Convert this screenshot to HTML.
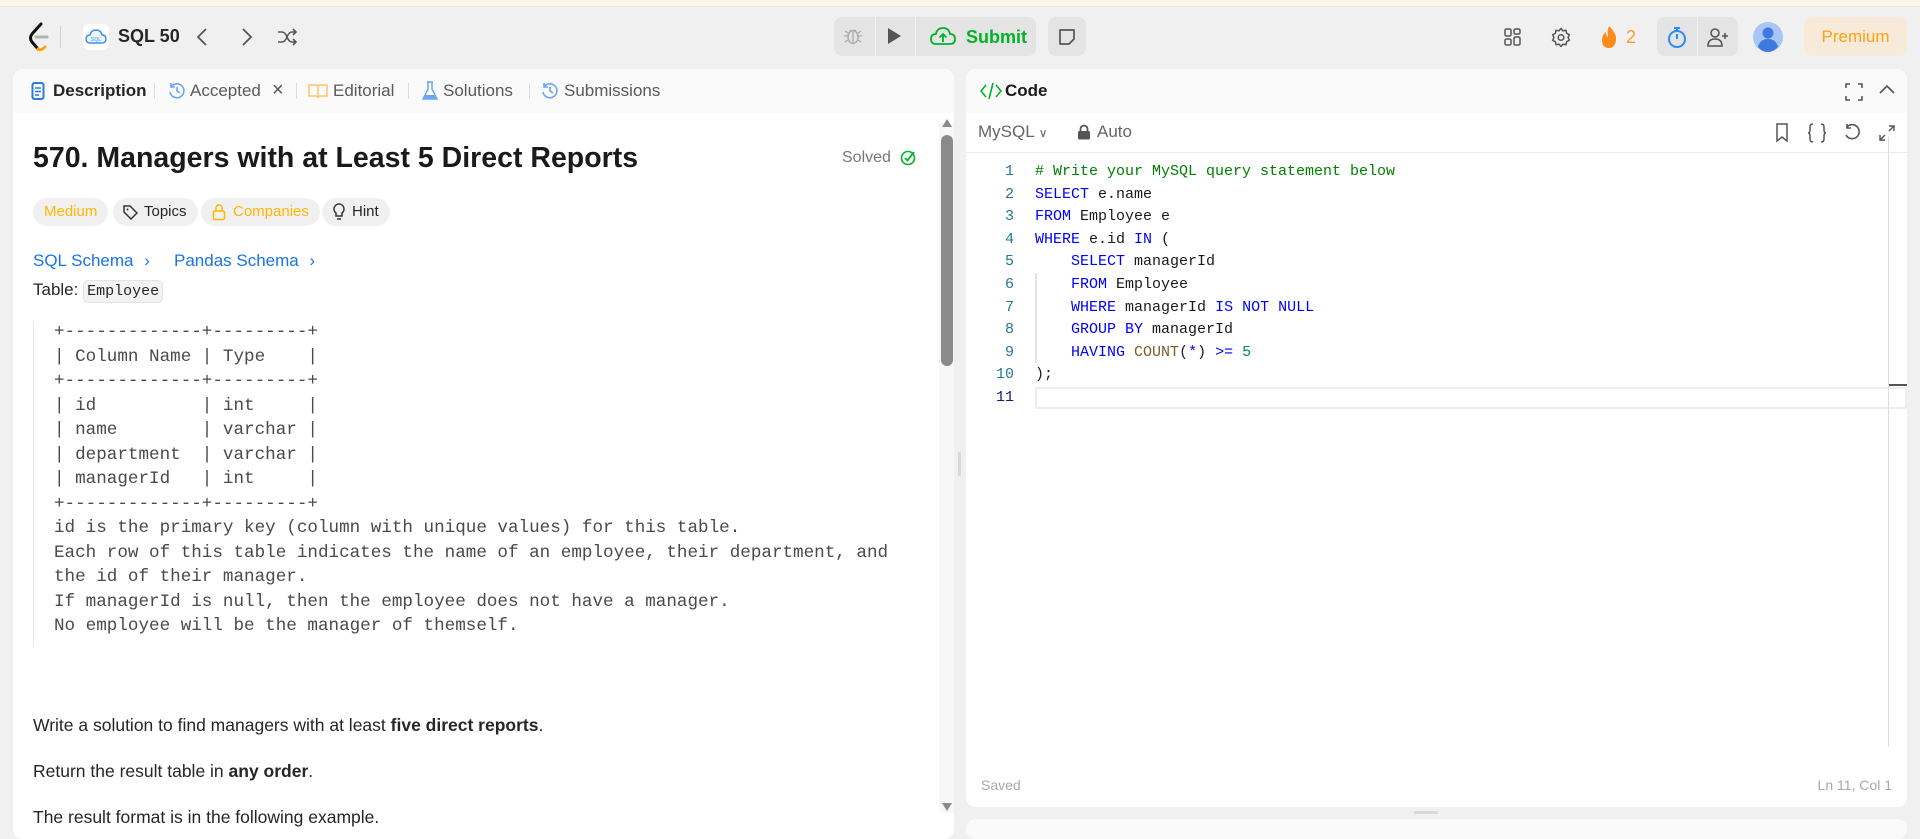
<!DOCTYPE html>
<html><head><meta charset="utf-8"><style>
*{box-sizing:border-box;margin:0;padding:0}
body{width:1920px;height:826px;overflow:hidden;background:#f0f0f0;font-family:"Liberation Sans",sans-serif;color:#262626;position:relative}
.abs{position:absolute}
.cream{left:0;top:0;width:1920px;height:7px;background:#fdf6e8;border-bottom:1px solid #eee6d6}
.btn{background:#e4e4e4;border-radius:8px}
.panel{background:#fff;border-radius:10px;overflow:hidden}
.tabbar{background:#fafafa;height:44px;position:absolute;left:0;top:0;right:0;display:flex;align-items:center;font-size:17px;color:#5a5a5a}
.mono{font-family:"Liberation Mono",monospace}
.tag{position:absolute;top:129px;height:28px;border-radius:14px;background:#f0f0f0;font-size:15px;line-height:28px;padding:0 11px}
pre{font-family:"Liberation Mono",monospace;font-size:17.6px;line-height:24.5px;color:#4a4a4a}
.code div{height:22.6px;line-height:22.6px;white-space:pre;position:relative}
.k{color:#0000ff}.c{color:#008000}.n{color:#098658}.f{color:#795e26}
.ln{position:absolute;left:8px;width:40px;text-align:right;color:#237893}
.tx{position:absolute;left:69px}
</style></head><body>
<div class="abs cream"></div>

<svg class="abs" style="left:28px;top:22px" width="22" height="30" viewBox="0 0 22 30"><path d="M13 2 L4 12 Q1 16 4 20 L10 27" stroke="#111" stroke-width="3" fill="none" stroke-linecap="round"/><path d="M8 15 H19" stroke="#b3b3b3" stroke-width="3" stroke-linecap="round"/><path d="M10 27 Q13 29 17 25" stroke="#ffa116" stroke-width="3" fill="none" stroke-linecap="round"/></svg>
<div class="abs" style="left:60px;top:26px;width:1px;height:22px;background:#d0d0d0"></div>
<div class="abs" style="left:83px;top:24px;width:26px;height:26px;background:#fff;border-radius:6px"></div>
<svg class="abs" style="left:85px;top:28px" width="22" height="18" viewBox="0 0 22 18"><path d="M5 15 Q1 15 1 11 Q1 7 5 7 Q6 2 11 2 Q16 2 17 7 Q21 7 21 11 Q21 15 17 15Z" fill="#eaf4ff" stroke="#3d8fe8" stroke-width="1.4"/><text x="11" y="13" font-size="5" fill="#3d8fe8" text-anchor="middle" font-family="Liberation Sans">SQL</text></svg>
<div class="abs" style="left:118px;top:26px;font-size:18px;font-weight:bold;color:#262626">SQL 50</div>
<svg class="abs" style="left:195px;top:27px" width="14" height="20"><path d="M11 2 L3 10 L11 18" stroke="#555" stroke-width="1.8" fill="none"/></svg>
<svg class="abs" style="left:240px;top:27px" width="14" height="20"><path d="M3 2 L11 10 L3 18" stroke="#555" stroke-width="1.8" fill="none"/></svg>
<svg class="abs" style="left:276px;top:27px" width="22" height="20" viewBox="0 0 22 20"><path d="M2 5 H6 Q9 5 11 10 Q13 15 16 15 H20 M2 15 H6 Q9 15 11 10 Q13 5 16 5 H20 M17 2 L20 5 L17 8 M17 12 L20 15 L17 18" stroke="#555" stroke-width="1.6" fill="none"/></svg>

<div class="abs btn" style="left:834px;top:17px;width:202px;height:39px"></div>
<div class="abs" style="left:875px;top:17px;width:1px;height:39px;background:#f0f0f0"></div>
<div class="abs" style="left:915px;top:17px;width:1px;height:39px;background:#f0f0f0"></div>
<svg class="abs" style="left:843px;top:26px" width="20" height="20" viewBox="0 0 20 20"><ellipse cx="10" cy="11" rx="5" ry="6.5" stroke="#aaa" stroke-width="1.4" fill="none"/><path d="M10 5v13M5 10H1M19 10h-4M5 14l-3 2M15 14l3 2M5 7L2 5M15 7l3-2M7 4l1 1M13 4l-1 1" stroke="#aaa" stroke-width="1.3"/></svg>
<svg class="abs" style="left:886px;top:27px" width="16" height="18"><path d="M2 1 L15 9 L2 17Z" fill="#555"/></svg>
<svg class="abs" style="left:930px;top:25px" width="26" height="22" viewBox="0 0 26 22"><path d="M6 19 Q1 19 1 14 Q1 9 6 9 Q7 3 13 3 Q19 3 20 9 Q25 9 25 14 Q25 19 20 19Z" stroke="#01b328" stroke-width="1.8" fill="none"/><path d="M13 17V9M9.5 12.5L13 9l3.5 3.5" stroke="#01b328" stroke-width="1.8" fill="none"/></svg>
<div class="abs" style="left:966px;top:27px;font-size:18px;font-weight:bold;color:#01b328">Submit</div>
<div class="abs btn" style="left:1048px;top:17px;width:38px;height:39px"></div>
<svg class="abs" style="left:1057px;top:27px" width="20" height="20"><path d="M3 3H17V12L12 17H3Z" stroke="#555" stroke-width="1.7" fill="none" stroke-linejoin="round"/></svg>

<svg class="abs" style="left:1503px;top:27px" width="20" height="20"><rect x="2" y="2" width="6" height="7" rx="1.5" stroke="#555" stroke-width="1.5" fill="none"/><rect x="11" y="2" width="6" height="5" rx="1.5" stroke="#555" stroke-width="1.5" fill="none"/><rect x="2" y="12" width="6" height="6" rx="1.5" stroke="#555" stroke-width="1.5" fill="none"/><rect x="11" y="10" width="6" height="8" rx="1.5" stroke="#555" stroke-width="1.5" fill="none"/></svg>
<svg class="abs" style="left:1551px;top:27px" width="20" height="20" viewBox="0 0 20 20"><path d="M10 1.5l2 2.3 3-.5.6 3 2.7 1.4-1.2 2.8 1.2 2.8-2.7 1.4-.6 3-3-.5-2 2.3-2-2.3-3 .5-.6-3L1.7 13.3l1.2-2.8L1.7 7.7l2.7-1.4.6-3 3 .5Z" stroke="#555" stroke-width="1.5" fill="none"/><circle cx="10" cy="10.5" r="2.8" stroke="#555" stroke-width="1.5" fill="none"/></svg>
<svg class="abs" style="left:1600px;top:25px" width="18" height="24" viewBox="0 0 18 24"><path d="M9 1 Q17 9 16 15 Q15 23 9 23 Q2 23 2 15 Q2 10 6 7 Q6 11 8 12 Q7 5 9 1Z" fill="#ff8a1c"/></svg>
<div class="abs" style="left:1626px;top:27px;font-size:18px;color:#ff9b2f">2</div>
<div class="abs btn" style="left:1657px;top:17px;width:81px;height:39px"></div>
<div class="abs" style="left:1697px;top:17px;width:1px;height:39px;background:#f0f0f0"></div>
<svg class="abs" style="left:1666px;top:25px" width="22" height="24" viewBox="0 0 22 24"><circle cx="11" cy="14" r="8" stroke="#2c8cf4" stroke-width="2" fill="none"/><path d="M8 3h6M11 3v3M11 14V9" stroke="#2c8cf4" stroke-width="2"/></svg>
<svg class="abs" style="left:1706px;top:26px" width="24" height="22" viewBox="0 0 24 22"><circle cx="9" cy="7" r="4" stroke="#555" stroke-width="1.6" fill="none"/><path d="M2 20 Q2 13 9 13 Q16 13 16 20Z" stroke="#555" stroke-width="1.6" fill="none"/><path d="M19 7v6M16 10h6" stroke="#555" stroke-width="1.6"/></svg>
<svg class="abs" style="left:1753px;top:22px" width="30" height="30"><circle cx="15" cy="15" r="15" fill="#a9c5f8"/><circle cx="15" cy="11" r="5.5" fill="#3e78e0"/><path d="M5 25 Q7 17 15 17 Q23 17 25 25 Q20 30 15 30 Q9 30 5 25Z" fill="#3e78e0"/></svg>
<div class="abs" style="left:1804px;top:17px;width:103px;height:39px;background:#f7ead8;border-radius:8px;color:#ffa116;font-size:17px;text-align:center;line-height:39px">Premium</div>

<div class="abs panel" style="left:13px;top:69px;width:941px;height:770px">
  <div class="tabbar">
    <svg class="abs" style="left:18px;top:13px" width="14" height="18"><rect x="1.5" y="1" width="11" height="16" rx="2" stroke="#2c7be5" stroke-width="2" fill="none"/><path d="M4 6h6M4 9.5h6M4 13h4" stroke="#2c7be5" stroke-width="1.6"/></svg>
    <span class="abs" style="left:40px;top:12px;font-weight:bold;color:#262626">Description</span>
    <span class="abs" style="left:141px;top:14px;width:1px;height:16px;background:#ddd"></span>
    <svg class="abs" style="left:155px;top:13px" width="18" height="18" viewBox="0 0 18 18"><path d="M3 5 A7 7 0 1 1 2 10 M3 1v4h4 M9 5v4l3 2" stroke="#6ba6f0" stroke-width="1.6" fill="none"/></svg>
    <span class="abs" style="left:177px;top:12px">Accepted</span>
    <span class="abs" style="left:259px;top:10px;font-size:20px;color:#555">×</span>
    <span class="abs" style="left:283px;top:14px;width:1px;height:16px;background:#ddd"></span>
    <svg class="abs" style="left:295px;top:14px" width="20" height="16"><path d="M1 2h6q3 0 3 2v11q0-2-3-2H1ZM19 2h-6q-3 0-3 2v11q0-2 3-2h6Z" stroke="#ffc46b" stroke-width="1.5" fill="none"/></svg>
    <span class="abs" style="left:320px;top:12px">Editorial</span>
    <span class="abs" style="left:395px;top:14px;width:1px;height:16px;background:#ddd"></span>
    <svg class="abs" style="left:409px;top:12px" width="16" height="20"><path d="M5 1h6M6 1v7L1 18h14L10 8V1" stroke="#6ba6f0" stroke-width="1.5" fill="none"/><path d="M3 14h10l2 4H1Z" fill="#6ba6f0"/></svg>
    <span class="abs" style="left:430px;top:12px">Solutions</span>
    <span class="abs" style="left:516px;top:14px;width:1px;height:16px;background:#ddd"></span>
    <svg class="abs" style="left:528px;top:13px" width="18" height="18" viewBox="0 0 18 18"><path d="M3 5 A7 7 0 1 1 2 10 M3 1v4h4 M9 5v4l3 2" stroke="#6ba6f0" stroke-width="1.6" fill="none"/></svg>
    <span class="abs" style="left:551px;top:12px">Submissions</span>
  </div>
  <div class="abs" style="left:20px;top:73px;font-size:28.5px;font-weight:bold;color:#1a1a1a">570. Managers with at Least 5 Direct Reports</div>
  <div class="abs" style="left:829px;top:80px;font-size:16px;color:#777">Solved</div>
  <svg class="abs" style="left:887px;top:80px" width="16" height="18"><circle cx="8" cy="9" r="6.5" stroke="#01b328" stroke-width="1.6" fill="none"/><path d="M5 9l2.5 2.5L14 3" stroke="#01b328" stroke-width="1.8" fill="none"/></svg>
  <div class="tag" style="left:20px;color:#ffb800">Medium</div>
  <div class="tag" style="left:100px;padding-left:31px">Topics</div>
  <svg class="abs" style="left:109px;top:135px" width="16" height="16"><path d="M2 2h6l7 7-6 6-7-7Z" stroke="#333" stroke-width="1.5" fill="none"/><circle cx="5.5" cy="5.5" r="1" fill="#333"/></svg>
  <div class="tag" style="left:188px;color:#ffb800;padding-left:32px">Companies</div>
  <svg class="abs" style="left:199px;top:134px" width="14" height="18"><rect x="1.5" y="8" width="11" height="8.5" rx="1.5" stroke="#ffb800" stroke-width="1.5" fill="none"/><path d="M4 8V5a3 3 0 0 1 6 0v3" stroke="#ffb800" stroke-width="1.5" fill="none"/></svg>
  <div class="tag" style="left:309px;padding-left:30px">Hint</div>
  <svg class="abs" style="left:319px;top:134px" width="14" height="19"><path d="M7 1a5 5 0 0 0-3 9v3h6v-3a5 5 0 0 0-3-9ZM5 16h4" stroke="#333" stroke-width="1.5" fill="none"/></svg>
  <div class="abs" style="left:20px;top:182px;font-size:17px;color:#1a73e8">SQL Schema <span style="margin-left:6px">›</span></div>
  <div class="abs" style="left:161px;top:182px;font-size:17px;color:#1a73e8">Pandas Schema <span style="margin-left:6px">›</span></div>
  <div class="abs" style="left:20px;top:211px;font-size:17px;color:#262626">Table: <span class="mono" style="font-size:15px;background:#f3f3f3;border:1px solid #e3e3e3;border-radius:5px;padding:2px 3px">Employee</span></div>
  <div class="abs" style="left:20px;top:252px;width:1px;height:326px;background:#e3e3e3"></div>
  <pre class="abs" style="left:41px;top:251px">+-------------+---------+
| Column Name | Type    |
+-------------+---------+
| id          | int     |
| name        | varchar |
| department  | varchar |
| managerId   | int     |
+-------------+---------+
id is the primary key (column with unique values) for this table.
Each row of this table indicates the name of an employee, their department, and
the id of their manager.
If managerId is null, then the employee does not have a manager.
No employee will be the manager of themself.</pre>
  <div class="abs" style="left:20px;top:646px;font-size:17.5px;color:#262626">Write a solution to find managers with at least <b>five direct reports</b>.</div>
  <div class="abs" style="left:20px;top:692px;font-size:17.5px;color:#262626">Return the result table in <b>any order</b>.</div>
  <div class="abs" style="left:20px;top:738px;font-size:17.5px;color:#262626">The result format is in the following example.</div>
  <div class="abs" style="left:926px;top:54px;width:15px;height:690px;background:#f7f7f7"></div>
  <div class="abs" style="left:928px;top:66px;width:12px;height:231px;background:#8a8a8a;border-radius:6px"></div>
  <svg class="abs" style="left:928px;top:49px" width="12" height="10"><path d="M6 1L11 9H1Z" fill="#8a8a8a"/></svg>
  <svg class="abs" style="left:928px;top:733px" width="12" height="10"><path d="M6 9L11 1H1Z" fill="#8a8a8a"/></svg>
</div>
<div class="abs" style="left:958px;top:452px;width:3px;height:24px;background:#d8d8d8;border-radius:2px"></div>

<div class="abs panel" style="left:966px;top:69px;width:941px;height:738px">
  <div class="tabbar" style="height:44px">
    <svg class="abs" style="left:14px;top:13px" width="22" height="18"><path d="M6 3L1 9l5 6M16 3l5 6-5 6M13 1L9 17" stroke="#01b328" stroke-width="1.6" fill="none"/></svg>
    <span class="abs" style="left:39px;top:12px;font-weight:bold;color:#1a1a1a">Code</span>
    <svg class="abs" style="left:879px;top:14px" width="18" height="18"><path d="M1 5V1h4M13 1h4v4M17 13v4h-4M5 17H1v-4" stroke="#555" stroke-width="1.6" fill="none"/></svg>
    <svg class="abs" style="left:913px;top:15px" width="16" height="12"><path d="M1 9L8 2l7 7" stroke="#555" stroke-width="1.6" fill="none"/></svg>
  </div>
  <div class="abs" style="left:12px;top:53px;font-size:17px;color:#666">MySQL <span style="font-size:12px">∨</span></div>
  <svg class="abs" style="left:111px;top:55px" width="14" height="16"><rect x="1" y="7" width="12" height="8.5" rx="1.5" fill="#555"/><path d="M3.5 7V5a3.5 3.5 0 0 1 7 0v2" stroke="#555" stroke-width="1.8" fill="none"/></svg>
  <div class="abs" style="left:131px;top:53px;font-size:17px;color:#666">Auto</div>
  <svg class="abs" style="left:809px;top:54px" width="14" height="20"><path d="M2 1h10v17l-5-4-5 4Z" stroke="#555" stroke-width="1.5" fill="none"/></svg>
  <svg class="abs" style="left:841px;top:54px" width="20" height="20"><path d="M6 1Q3 1 3 4v3q0 3-2 3 2 0 2 3v3q0 3 3 3M14 1q3 0 3 3v3q0 3 2 3-2 0-2 3v3q0 3-3 3" stroke="#555" stroke-width="1.5" fill="none"/></svg>
  <svg class="abs" style="left:877px;top:54px" width="18" height="18"><path d="M4 4A7 7 0 1 1 3 12M4 1v4h4" stroke="#555" stroke-width="1.6" fill="none"/></svg>
  <svg class="abs" style="left:913px;top:56px" width="16" height="16"><path d="M10 1h5v5M15 1L10 6M6 15H1v-5M1 15l5-5" stroke="#555" stroke-width="1.4" fill="none"/></svg>
  <div class="abs" style="left:0;top:83px;width:941px;height:1px;background:#ececec"></div>
  <div class="abs" style="left:69px;top:318px;width:872px;height:22px;border:2px solid #eeeeee"></div>
  <div class="abs mono code" style="left:0;top:92px;width:941px;font-size:15px;color:#1a1a1a">
    <div><span class="ln">1</span><span class="tx c"># Write your MySQL query statement below</span></div>
    <div><span class="ln">2</span><span class="tx"><span class="k">SELECT</span> e.name</span></div>
    <div><span class="ln">3</span><span class="tx"><span class="k">FROM</span> Employee e</span></div>
    <div><span class="ln">4</span><span class="tx"><span class="k">WHERE</span> e.id <span class="k">IN</span> (</span></div>
    <div><span class="ln">5</span><span class="tx">    <span class="k">SELECT</span> managerId</span></div>
    <div><span class="ln">6</span><span class="tx">    <span class="k">FROM</span> Employee</span></div>
    <div><span class="ln">7</span><span class="tx">    <span class="k">WHERE</span> managerId <span class="k">IS NOT NULL</span></span></div>
    <div><span class="ln">8</span><span class="tx">    <span class="k">GROUP BY</span> managerId</span></div>
    <div><span class="ln">9</span><span class="tx">    <span class="k">HAVING</span> <span class="f">COUNT</span>(<span class="k">*</span>) <span class="k">&gt;=</span> <span class="n">5</span></span></div>
    <div><span class="ln">10</span><span class="tx">);</span></div>
    <div><span class="ln" style="color:#0b216f">11</span></div>
  </div>
  <div class="abs" style="left:69px;top:204px;width:2px;height:90px;background:#e3e3e3"></div>
  <div class="abs" style="left:922px;top:68px;width:1px;height:610px;background:#ddd"></div>
  <div class="abs" style="left:923px;top:315px;width:18px;height:2px;background:#555"></div>
  <div class="abs" style="left:15px;top:708px;font-size:14px;color:#a8a8a8">Saved</div>
  <div class="abs" style="left:820px;top:708px;font-size:14px;color:#a8a8a8;width:106px;text-align:right">Ln 11, Col 1</div>
</div>
<div class="abs" style="left:1414px;top:811px;width:24px;height:3px;background:#d8d8d8;border-radius:2px"></div>
<div class="abs" style="left:966px;top:819px;width:941px;height:20px;background:#fafafa;border-radius:10px"></div>
</body></html>
